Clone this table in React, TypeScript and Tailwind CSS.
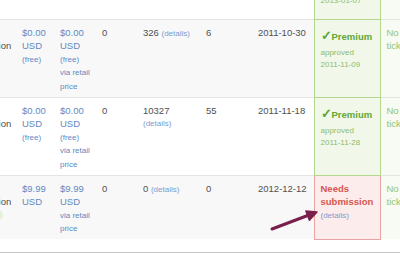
import React from "react";

const price = "text-[#6189c2]";
const link = "text-[#7d9ccf]";
const dark = "text-[#505050]";

function L({ children, cls = "" }: { children?: React.ReactNode; cls?: string }) {
  return <div className={`h-[13.4px] leading-[13.4px] whitespace-nowrap ${cls}`}>{children}</div>;
}
function S({ children, cls = "" }: { children?: React.ReactNode; cls?: string }) {
  return (
    <div className={`h-[13.4px] leading-[13.4px] text-[8px] whitespace-nowrap ${cls}`}>{children}</div>
  );
}

function Premium({ date }: { date: string }) {
  return (
    <div>
      <div className="h-[21px] leading-[21px] font-bold text-[9.5px] text-[#5fa736] whitespace-nowrap">
        <span className="text-[12.5px] leading-none">✓</span>Premium
      </div>
      <div className="h-[12px] leading-[12px] text-[8px] text-[#8dbb6d] whitespace-nowrap">approved</div>
      <div className="h-[12px] leading-[12px] text-[8px] text-[#8dbb6d] whitespace-nowrap">{date}</div>
    </div>
  );
}

const td = "align-top px-[6px] pt-[6px] pb-[4px] border-t border-[#e3e3e3]";
const greenTd = "align-top px-[6px] pt-[6px] pb-[4px] border border-[#b2d78f] bg-[#f1f8ea]";
const redTd = "align-top px-[6px] pt-[6px] pb-[4px] border border-[#e8a4a4] bg-[#fcecec]";
const noTd = "align-top px-[6px] pt-[6px] pb-[4px] border-t border-[#e3e3e3] bg-[#f7fbf3] text-[#93c46f]";

function FreeRow({
  bg,
  sales,
  d1,
  date,
  approved,
  split,
}: {
  bg: string;
  sales: string;
  d1: string;
  date: string;
  approved: string;
  split?: boolean;
}) {
  return (
    <tr className={bg}>
      <td className={`${td} ${dark}`}>
        <L>Free</L>
        <L>Subscription</L>
      </td>
      <td className={td}>
        <L cls={price}>$0.00</L>
        <L cls={price}>USD</L>
        <S cls={price}>(free)</S>
      </td>
      <td className={td}>
        <L cls={price}>$0.00</L>
        <L cls={price}>USD</L>
        <S cls={price}>(free)</S>
        <S cls={price}>via retail</S>
        <S cls={price}>price</S>
      </td>
      <td className={`${td} ${dark}`}>
        <L>0</L>
      </td>
      <td className={`${td} ${dark}`}>
        {split ? (
          <>
            <L>{sales}</L>
            <S cls={link}>(details)</S>
          </>
        ) : (
          <L>
            {sales} <span className={`text-[8px] ${link}`}>(details)</span>
          </L>
        )}
      </td>
      <td className={`${td} ${dark}`}>
        <L>{d1}</L>
      </td>
      <td className={`${td} ${dark}`}>
        <L>{date}</L>
      </td>
      <td className={greenTd}>
        <Premium date={approved} />
      </td>
      <td className={noTd}>
        <L>No</L>
        <L>tickets</L>
      </td>
    </tr>
  );
}

export default function App() {
  return (
    <div className="relative w-[400px] h-[253px] overflow-hidden bg-white font-['Liberation_Sans',Arial,sans-serif] text-[9.5px] leading-[13.4px]">
      <table className="table-fixed border-collapse w-[487px] -ml-[47px] -mt-[45px]">
        <colgroup>
          <col className="w-[63px]" />
          <col className="w-[38px]" />
          <col className="w-[42px]" />
          <col className="w-[41px]" />
          <col className="w-[63px]" />
          <col className="w-[52px]" />
          <col className="w-[62px]" />
          <col className="w-[66px]" />
          <col className="w-[60px]" />
        </colgroup>
        <tbody>
          <tr className="bg-white">
            <td className="h-[64px] p-0" />
            <td />
            <td />
            <td />
            <td />
            <td />
            <td />
            <td className={greenTd}>
              <Premium date="2013-01-07" />
            </td>
            <td className="bg-[#f7fbf3]" />
          </tr>
          <FreeRow bg="bg-[#f8f8f8]" sales="326" d1="6" date="2011-10-30" approved="2011-11-09" />
          <FreeRow bg="bg-white" sales="10327" d1="55" date="2011-11-18" approved="2011-11-28" split />
          <tr className="bg-[#f8f8f8]">
            <td className={`${td} ${dark}`}>
              <L>Paid</L>
              <L>Subscription</L>
              <div className="h-[13.4px] flex items-center">
                <span className="block w-[44px] h-[10px] rounded-[5px] bg-[#e4f2da]" />
              </div>
            </td>
            <td className={td}>
              <L cls={price}>$9.99</L>
              <L cls={price}>USD</L>
            </td>
            <td className={td}>
              <L cls={price}>$9.99</L>
              <L cls={price}>USD</L>
              <S cls={price}>via retail</S>
              <S cls={price}>price</S>
            </td>
            <td className={`${td} ${dark}`}>
              <L>0</L>
            </td>
            <td className={`${td} ${dark}`}>
              <L>
                0 <span className={`text-[8px] ${link}`}>(details)</span>
              </L>
            </td>
            <td className={`${td} ${dark}`}>
              <L>0</L>
            </td>
            <td className={`${td} ${dark}`}>
              <L>2012-12-12</L>
            </td>
            <td className={redTd}>
              <L cls="font-bold text-[#d5574f]">Needs</L>
              <L cls="font-bold text-[#d5574f]">submission</L>
              <S cls={link}>(details)</S>
            </td>
            <td className={noTd}>
              <L>No</L>
              <L>tickets</L>
            </td>
          </tr>
        </tbody>
      </table>
      <div className="mt-[12px] border-t-2 border-[#c4c4c4]" />
      <svg className="absolute inset-0 pointer-events-none" width="400" height="253" viewBox="0 0 400 253">
        <line x1="272" y1="229" x2="309" y2="215" stroke="#7a1f4c" strokeWidth="3" strokeLinecap="round" />
        <polygon
          points="317,212 309.4,220.2 305.9,210.9"
          fill="#7a1f4c"
          stroke="#7a1f4c"
          strokeWidth="1.5"
          strokeLinejoin="round"
        />
      </svg>
    </div>
  );
}
